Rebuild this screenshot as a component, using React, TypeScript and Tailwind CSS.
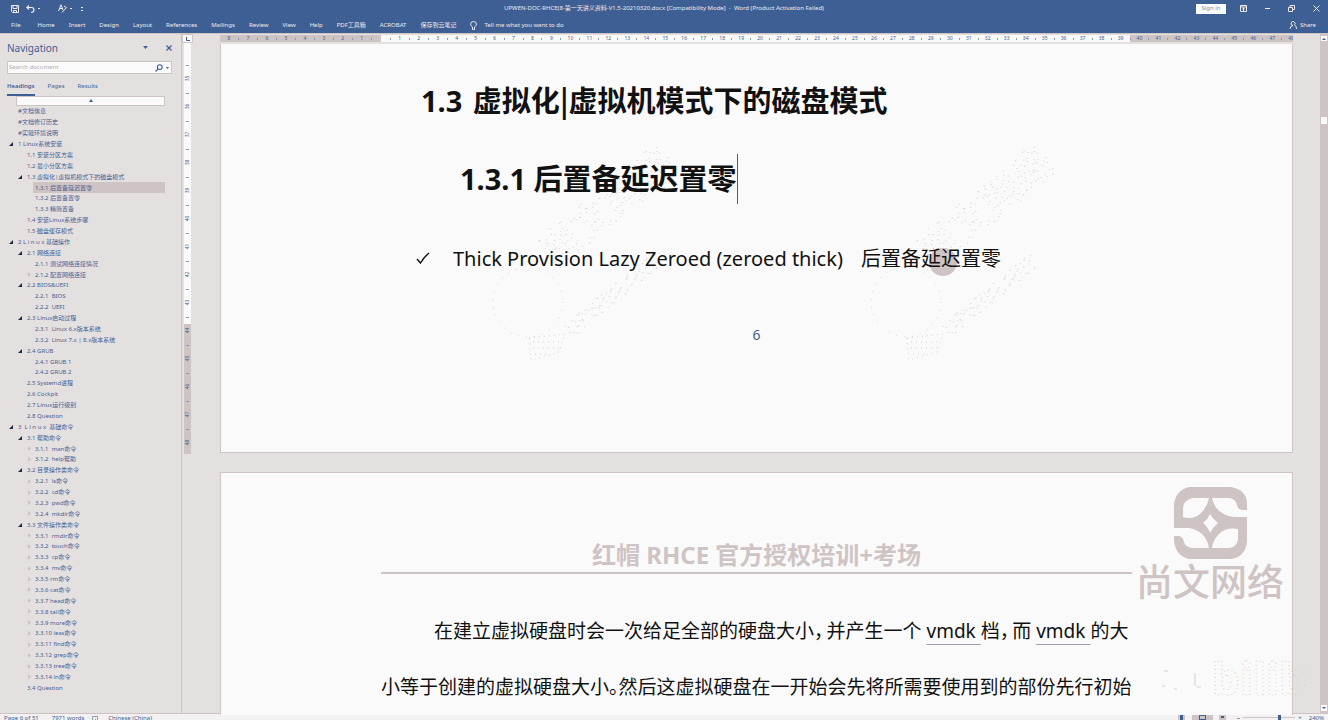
import React from 'react';

type Heading = { text: string; level: 1 | 2 | 3; open?: boolean; leaf?: boolean; selected?: boolean };

const headings: Heading[] = [
  { text: '#文档信息', level: 1 },
  { text: '#文档修订历史', level: 1 },
  { text: '#实验环境说明', level: 1 },
  { text: '1 Linux系统安装', level: 1, open: true },
  { text: '1.1 安装分区方案', level: 2 },
  { text: '1.2 最小分区方案', level: 2 },
  { text: '1.3 虚拟化|虚拟机模式下的磁盘模式', level: 2, open: true },
  { text: '1.3.1 后置备延迟置零', level: 3, selected: true },
  { text: '1.3.2 后置备置零', level: 3 },
  { text: '1.3.3 精简置备', level: 3 },
  { text: '1.4 安装Linux系统步骤', level: 2 },
  { text: '1.5 磁盘缓存模式', level: 2 },
  { text: '2 L i n u x 基础操作', level: 1, open: true },
  { text: '2.1 网络连接', level: 2, open: true },
  { text: '2.1.1 测试网络连接情况', level: 3 },
  { text: '2.1.2 配置网络连接', level: 3, leaf: true },
  { text: '2.2 BIOS&UEFI', level: 2, open: true },
  { text: '2.2.1  BIOS', level: 3 },
  { text: '2.2.2  UEFI', level: 3 },
  { text: '2.3 Linux启动过程', level: 2, open: true },
  { text: '2.3.1  Linux 6.x版本系统', level: 3 },
  { text: '2.3.2  Linux 7.x | 8.x版本系统', level: 3 },
  { text: '2.4 GRUB', level: 2, open: true },
  { text: '2.4.1 GRUB 1', level: 3 },
  { text: '2.4.2 GRUB 2', level: 3 },
  { text: '2.5 Systemd进程', level: 2 },
  { text: '2.6 Cockpit', level: 2 },
  { text: '2.7 Linux运行级别', level: 2 },
  { text: '2.8 Question', level: 2 },
  { text: '3  L i n u x  基础命令', level: 1, open: true },
  { text: '3.1 帮助命令', level: 2, open: true },
  { text: '3.1.1  man命令', level: 3, leaf: true },
  { text: '3.1.2  help帮助', level: 3, leaf: true },
  { text: '3.2 目录操作类命令', level: 2, open: true },
  { text: '3.2.1  ls命令', level: 3, leaf: true },
  { text: '3.2.2  cd命令', level: 3, leaf: true },
  { text: '3.2.3  pwd命令', level: 3, leaf: true },
  { text: '3.2.4  mkdir命令', level: 3, leaf: true },
  { text: '3.3 文件操作类命令', level: 2, open: true },
  { text: '3.3.1  rmdir命令', level: 3, leaf: true },
  { text: '3.3.2  touch命令', level: 3, leaf: true },
  { text: '3.3.3  cp命令', level: 3, leaf: true },
  { text: '3.3.4  mv命令', level: 3, leaf: true },
  { text: '3.3.5 rm命令', level: 3, leaf: true },
  { text: '3.3.6 cat命令', level: 3, leaf: true },
  { text: '3.3.7 head命令', level: 3, leaf: true },
  { text: '3.3.8 tail命令', level: 3, leaf: true },
  { text: '3.3.9 more命令', level: 3, leaf: true },
  { text: '3.3.10 less命令', level: 3, leaf: true },
  { text: '3.3.11 find命令', level: 3, leaf: true },
  { text: '3.3.12 grep命令', level: 3, leaf: true },
  { text: '3.3.13 tree命令', level: 3, leaf: true },
  { text: '3.3.14 ln命令', level: 3, leaf: true },
  { text: '3.4 Question', level: 2 },
];

const tabs = ['File', 'Home', 'Insert', 'Design', 'Layout', 'References', 'Mailings', 'Review', 'View', 'Help', 'PDF工具箱', 'ACROBAT', '保存到云笔记'];

const indents = { 1: 'pl-0', 2: 'pl-[9px]', 3: 'pl-[17px]' };

const rulerMarks = Array.from({ length: 57 }, (_, i) => Math.abs(i - 8));
const sideMarks = Array.from({ length: 14 }, (_, i) => 35 + i);

function TitleBar() {
  return (
    <div className="grid h-[17px] grid-cols-[1fr_auto_1fr] items-center">
      <div className="flex items-center pl-[11px]">
        <button aria-label="Save">
          <svg className="block size-[8px]" viewBox="0 0 8 8" fill="none" stroke="currentColor">
            <path d="M.5.5h7v7h-6l-1-1zM2 .5v3h4v-3M2.5 7.500v-2h3v2" />
          </svg>
        </button>
        <button aria-label="Undo" className="ml-[7px] flex items-center gap-[3px]">
          <svg className="block h-[8px] w-[9px]" viewBox="0 0 9 8" fill="none" stroke="currentColor" strokeWidth="1.2">
            <path d="M3 .5L.8 2.500 3 4.500M1 2.500h4.500q2.500 0 2.500 2.500T5 7.500" />
          </svg>
          <span className="h-px w-[2px] bg-current" />
        </button>
        <button aria-label="Text effects" className="ml-[18px] flex items-center gap-[3px]">
          <svg className="block size-[9px]" viewBox="0 0 9 9" fill="none" stroke="currentColor">
            <path d="M.5 7L3 .8 5 6M1.300 4.500h3M4 8.500L8.500 3.500M6 2l2.500 1.500" />
          </svg>
          <span className="h-px w-[2px] bg-current" />
        </button>
        <button aria-label="Customize toolbar" className="ml-[9px] flex flex-col gap-[2px]">
          <span className="h-px w-[2px] bg-current" />
          <span className="h-px w-[2px] bg-current" />
        </button>
      </div>
      <div className="whitespace-pre text-[6px] leading-[9px]">UPWEN-DOC-RHCE(8-第一天讲义资料-V1.5-20210320.docx [Compatibility Mode]  -  Word (Product Activation Failed)</div>
      <div className="flex items-center justify-end pr-[8px]">
        <button className="h-[10px] w-[30px] bg-[#fafafa] text-[6px] leading-[9px] text-[#8d93a8]">Sign in</button>
        <button aria-label="Ribbon display options" className="ml-[14px]">
          <svg className="block h-[7px] w-[7px]" viewBox="0 0 7 7" fill="none" stroke="currentColor">
            <path d="M.5.5h6v6h-6zM.5 2h6M3.500 6V3M2.300 4.200l1.200-1.200 1.200 1.200" />
          </svg>
        </button>
        <button aria-label="Minimize" className="ml-[18px] h-px w-[5px] bg-current" />
        <button aria-label="Restore" className="ml-[18px]">
          <svg className="block size-[7px]" viewBox="0 0 7 7" fill="none" stroke="currentColor">
            <path d="M.5 2.500h4v4h-4zM2 2.500v-2h4.500v4h-2" />
          </svg>
        </button>
        <button aria-label="Close" className="ml-[18px]">
          <svg className="block size-[7px]" viewBox="0 0 7 7" fill="none" stroke="currentColor">
            <path d="M.5.5l6 6M6.500.5l-6 6" />
          </svg>
        </button>
      </div>
    </div>
  );
}

function Ribbon() {
  return (
    <nav className="flex h-[16px] items-center pr-[12px] pl-[11px] text-[6px] leading-[10px]">
      <div className="flex items-center gap-[14px] whitespace-nowrap">
        {tabs.map((t) => (
          <button key={t} className={t === 'File' ? 'mr-[3px]' : ''}>{t}</button>
        ))}
        <label className="flex items-center gap-[7px]">
          <svg className="block h-[9px] w-[7px]" viewBox="0 0 7 9" fill="none" stroke="currentColor">
            <path d="M2.500 6Q.6 4.800.6 3.200A2.900 2.700 0 0 1 6.400 3.200Q6.400 4.800 4.500 6V8.400h-2z" />
          </svg>
          <input aria-label="Tell me" className="w-[100px] bg-transparent placeholder:text-[#efebec]" placeholder="Tell me what you want to do" />
        </label>
      </div>
      <button className="ml-auto flex items-center gap-[3px]">
        <svg className="block size-[8px]" viewBox="0 0 8 8" fill="none" stroke="currentColor">
          <path d="M4 4.500A2 2 0 1 1 5.500 3.900M1 8q0-3 3-3.300M5.500 4q2 1 2 4" />
        </svg>
        Share
      </button>
    </nav>
  );
}

function Navigation() {
  return (
    <aside className="flex w-[182px] shrink-0 flex-col border-r border-[#cec4c4] pb-[20px] text-[#3e5f94]">
      <div className="flex h-[27px] items-center pr-[9px] pl-[7px]">
        <h2 className="text-[10px] leading-[14px]">Navigation</h2>
        <button aria-label="Pane options" className="ml-auto">
          <svg className="block h-[3px] w-[5px]" viewBox="0 0 5 3" fill="currentColor"><path d="M0 0h5L2.500 3z" /></svg>
        </button>
        <button aria-label="Close pane" className="ml-[18px]">
          <svg className="block size-[6px]" viewBox="0 0 6 6" stroke="currentColor" strokeWidth="1.200"><path d="M.5.5l5 5M5.500.5l-5 5" /></svg>
        </button>
      </div>
      <div className="mr-[9px] ml-[7px] flex h-[13px] items-center border border-[#cec4c4] bg-[#fafafa] pr-[2px] pl-[1px]">
        <input aria-label="Search document" placeholder="Search document" className="min-w-0 flex-1 text-[6px] leading-[9px] placeholder:text-[#b3abad]" />
        <button aria-label="Search" className="flex items-center gap-[3px]">
          <svg className="block size-[8px]" viewBox="0 0 8 8" fill="none" stroke="currentColor" strokeWidth="1.100">
            <circle cx="4.800" cy="3.100" r="2.400" /><path d="M3 5L.5 7.500" />
          </svg>
          <svg className="block h-[2px] w-[3px]" viewBox="0 0 3 2" fill="currentColor"><path d="M0 0h3L1.500 2z" /></svg>
        </button>
      </div>
      <div className="mt-[5px] flex h-[17px] gap-[13px] pl-[7px] text-[6px] leading-[15px]">
        <button className="border-b-2 border-[#3e5f94] font-semibold">Headings</button>
        <button className="border-b-2 border-transparent">Pages</button>
        <button className="border-b-2 border-transparent">Results</button>
      </div>
      <button aria-label="Scroll to top" className="mr-[16px] ml-[16px] flex h-[10px] items-center justify-center border border-[#cec4c4] bg-[#fafafa]">
        <svg className="block size-[4px]" viewBox="0 0 4 4" fill="currentColor"><path d="M0 3h4L2 0z" /></svg>
      </button>
      <ul className="flex min-h-0 flex-1 flex-col pr-[16px] pl-[9px] text-[6px]">
        {headings.map((h) => (
          <li key={h.text} className={`flex min-h-0 flex-1 ${indents[h.level]}`}>
            <span className="flex w-[7px] shrink-0 items-center">
              {h.open && (
                <svg className="block size-[4px]" viewBox="0 0 4 4" fill="#1d2a44"><path d="M4 0v4H0z" /></svg>
              )}
              {h.leaf && (
                <svg className="ml-[2px] block h-[5px] w-[3px]" viewBox="0 0 3 5" fill="#cec4c4"><path d="M0 0l3 2.500L0 5z" /></svg>
              )}
            </span>
            <a href="#doc" className={`flex flex-1 items-center pl-[2px] leading-[8px] whitespace-pre ${h.selected ? 'bg-[#cec4c4]' : ''}`}>{h.text}</a>
          </li>
        ))}
      </ul>
    </aside>
  );
}

function SideRuler() {
  return (
    <div className="flex w-[38px] shrink-0 flex-col">
      <div className="flex h-[9px] w-[11px] items-center justify-center border border-[#cec4c4] bg-[#fafafa]">
        <svg className="block size-[4px]" viewBox="0 0 4 4" fill="none" stroke="#3e5f94"><path d="M.5 0v3.500H4" /></svg>
      </div>
      <div className="ml-[2px] flex h-[411px] w-[7px] flex-col bg-[linear-gradient(#fafafa_281px,#cec4c4_281px)] pt-[16px] text-[#3e5f94]">
        {sideMarks.map((n) => (
          <div key={n} className="flex h-[28px] shrink-0 flex-col items-center text-[5px] leading-[7px]">
            <span className="mt-[6px] h-px w-[3px] shrink-0 bg-[#8b9ab8]" />
            <span className="mt-[6px] flex h-[13px] -rotate-90 items-center">{n}</span>
          </div>
        ))}
      </div>
    </div>
  );
}

function TopRuler() {
  return (
    <div className="mt-px mb-[2px] flex h-[7px] shrink-0 overflow-hidden bg-[linear-gradient(to_right,#cec4c4_161px,#fafafa_161px,#fafafa_calc(100%-163px),#cec4c4_calc(100%-163px))] text-[#3e5f94]">
      <div className="mr-[-8px] flex flex-1">
        {rulerMarks.map((n, i) => (
          <div key={i} className="flex min-w-0 flex-1 items-center justify-center text-[5px] leading-[7px]">
            <span className="flex flex-1 justify-center">{i === 8 ? '' : n}</span>
            <span className="h-[2px] w-px bg-[#8b9ab8]" />
          </div>
        ))}
      </div>
    </div>
  );
}

function Stamp({ className }: { className: string }) {
  return (
    <svg className={`pointer-events-none absolute ${className}`} width="240" height="220" viewBox="0 0 240 220" fill="none" stroke="#d8d0d0" strokeDasharray="1 7">
      <circle cx="47" cy="162" r="35" />
      <g transform="rotate(-39 90 110)" fontFamily="'Noto Sans CJK SC', sans-serif" fontSize="40">
        <text x="66" y="114">尚文网络</text>
      </g>
      <g transform="rotate(-39 90 190)" fontFamily="'Noto Sans', sans-serif" fontSize="20">
        <text x="86" y="196">UPWEN.NET</text>
      </g>
      <path strokeDasharray="1 4" d="M48 198l36-4-6 18-28 8zM52 202h28M52 208h26M54 214h14" />
    </svg>
  );
}

function Brand() {
  return (
    <div className="pointer-events-none absolute top-[14px] right-[8px] flex flex-col items-center text-[#cec4c4]">
      <svg className="block h-[73px] w-[73px]" viewBox="0 0 73 73" fill="currentColor">
        <path d="M15 0H57Q73 3 73 17V23H69Q64 23 63 18Q62 12 55 11H38Q42 28 60 30H73V55Q71 70 57 72H15Q2 69 0 54V49H5Q9 50 10 55Q11 60 18 61H35Q32 44 15 41H0V17Q2 3 15 0ZM19 11Q9 13 9 22V30Q19 33 26 27Q33 21 35 11ZM38 61H55Q64 60 64 51V42Q52 40 45 47Q39 53 38 61ZM36 27Q34 32 29 36Q34 40 36 46Q39 40 44 36Q39 32 36 27Z" fillRule="evenodd" />
      </svg>
      <span className="text-[37px] leading-[44px] font-medium">尚文网络</span>
    </div>
  );
}

function VideoMark() {
  return (
    <svg className="pointer-events-none absolute right-[-18px] bottom-[14px] block h-[44px] w-[166px]" viewBox="0 0 166 44" fill="none" stroke="#d8d0d0">
      <path d="M20 14h4M51 16v13M53 30h4M18 29h3M30 32h3" />
      <text x="68" y="38" fontSize="44" fontFamily="'Noto Sans', sans-serif" fontWeight="700" strokeDasharray="1 3">bilibili</text>
    </svg>
  );
}

const comma = "mr-[3px] [font-feature-settings:'halt']";
const stop = "[font-feature-settings:'halt']";
const flagged = 'underline decoration-[#a39cb0] decoration-1 underline-offset-[6px]';

function Documents() {
  return (
    <main id="doc" className="flex min-w-0 flex-1 flex-col text-[#111111]">
      <TopRuler />
      <article className="relative h-[409px] shrink-0 border-r border-b border-l border-[#cec4c4] bg-[#fafafa] px-[160px]">
        <Stamp className="top-[96px] left-[260px]" />
        <Stamp className="top-[96px] left-[638px]" />
        <span className="absolute top-[204px] left-[708px] size-[28px] rounded-full bg-[#cec4c4]" />
        <div className="relative whitespace-nowrap">
          <h1 className="pt-[35px] pl-[40px] text-[29px] leading-[40px] font-bold">
            <span className="mr-[3px]">1.3</span> 虚拟化<span className="font-['Noto_Sans_CJK_SC',sans-serif]">|</span>虚拟机模式下的磁盘模式
          </h1>
          <h2 className="mt-[33px] flex pl-[79px] text-[29px] leading-[50px] font-bold">
            1.3.1 后置备延迟置零<span className="h-[50px] w-px bg-[#3e5f94]" />
          </h2>
          <p className="mt-[39px] flex items-center pl-[35px] text-[20px] leading-[32px]">
            <svg className="mr-[23px] block h-[14px] w-[14px]" viewBox="0 0 14 14" fill="none" stroke="currentColor" strokeWidth="1.400">
              <path d="M1 7l3.500 4Q8 5 13 1" />
            </svg>
            Thick Provision Lazy Zeroed (zeroed thick)<span className="ml-[18px]">后置备延迟置零</span>
          </p>
          <p className="mt-[50px] text-center text-[14px] leading-[20px] text-[#3e5f94]">6</p>
        </div>
      </article>
      <article className="relative mt-[19px] flex-1 border-t border-r border-l border-[#cec4c4] bg-[#fafafa] px-[160px]">
        <Brand />
        <header className="border-b-2 border-[#cec4c4] pt-[66px] pb-px text-center text-[24px] leading-[32px] font-bold whitespace-nowrap text-[#cec4c4]">
          红帽 RHCE 官方授权培训+考场
        </header>
        <VideoMark />
        <p className="relative mt-[29px] text-[19px] leading-[56px] whitespace-nowrap">
          <span className="pl-[53px]">
            在建立虚拟硬盘时会一次给足全部的硬盘大小<span className={comma}>，</span>并产生一个{' '}
            <span className={flagged}>vmdk </span>
            档<span className={comma}>，</span>而{' '}
            <span className={flagged}>vmdk </span>的大
          </span>
          <br />
          小等于创建的虚拟硬盘大小<span className={stop}>。</span>然后这虚拟硬盘在一开始会先将所需要使用到的部份先行初始
        </p>
      </article>
    </main>
  );
}

function ScrollBar() {
  return (
    <div className="ml-[27px] flex w-[8px] shrink-0 flex-col bg-[#cec4c4] pt-px text-[#3e5f94]">
      <button aria-label="Scroll up" className="flex h-[7px] items-center justify-center border border-[#cec4c4] bg-[#fafafa]">
        <svg className="block h-[2px] w-[4px]" viewBox="0 0 4 2" fill="currentColor"><path d="M0 2h4L2 0z" /></svg>
      </button>
      <span className="mt-[74px] h-[9px] border border-[#cec4c4] bg-[#fafafa]" />
      <button aria-label="Scroll down" className="mt-auto mb-px flex h-[8px] items-center justify-center border border-[#cec4c4] bg-[#fafafa]">
        <svg className="block h-[2px] w-[4px]" viewBox="0 0 4 2" fill="currentColor"><path d="M0 0h4L2 2z" /></svg>
      </button>
    </div>
  );
}

function StatusBar() {
  return (
    <footer className="flex h-[7px] shrink-0 items-start overflow-hidden border-t border-[#cec4c4] bg-[#f3f1f1] pr-[4px] pl-[4px] text-[6px] leading-[9px] whitespace-nowrap text-[#3e5f94]">
      <span>Page 6 of 51</span>
      <span className="ml-[13px]">7971 words</span>
      <svg className="mt-[2px] ml-[8px] block size-[7px]" viewBox="0 0 7 7" fill="none" stroke="#8b9ab8"><path d="M.5.5h5v6h-5zM3 3l3 3" /></svg>
      <span className="ml-[9px]">Chinese (China)</span>
      <div className="ml-auto flex h-full items-start">
        <button aria-label="Read mode" className="h-[6px] w-[7px] border-x-2 border-[#cec4c4] bg-[#3e5f94]" />
        <button aria-label="Print layout" className="ml-[7px] flex h-[6px] w-[21px] justify-center bg-[#cec4c4]">
          <span className="mt-px h-[5px] w-[7px] border border-[#3e5f94]" />
        </button>
        <button aria-label="Web layout" className="ml-[6px] h-[6px] w-[7px] border-2 border-[#cec4c4] bg-[#3e5f94]" />
        <span className="mt-[4px] ml-[11px] h-px w-[3px] bg-[#8b9ab8]" />
        <div className="mt-px ml-[3px] flex h-[5px] w-[52px] items-center">
          <span className="h-px w-[35px] bg-[#cec4c4]" />
          <span className="h-[5px] w-[3px] bg-[#3e5f94]" />
          <span className="h-px flex-1 bg-[#cec4c4]" />
        </div>
        <span className="ml-[3px]">+</span>
        <span className="ml-[7px]">240%</span>
      </div>
    </footer>
  );
}

export default function App() {
  return (
    <div className="flex h-screen min-h-[600px] flex-col overflow-hidden bg-[#e5e0e0] font-['Noto_Sans','Noto_Sans_CJK_SC',sans-serif]">
      <header className="shrink-0 bg-[#3e5f94] text-[#efebec]">
        <TitleBar />
        <Ribbon />
      </header>
      <div className="flex min-h-0 flex-1 border-t border-[#cec4c4]">
        <Navigation />
        <SideRuler />
        <Documents />
        <ScrollBar />
      </div>
      <StatusBar />
    </div>
  );
}
